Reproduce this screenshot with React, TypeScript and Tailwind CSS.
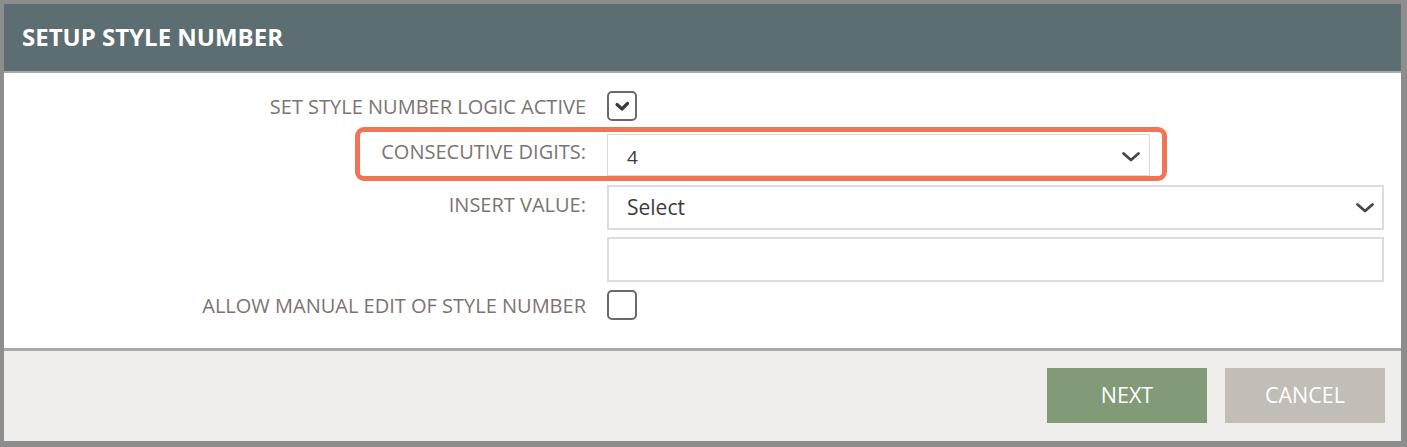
import React from "react";

const font = { fontFamily: '"Open Sans", "Liberation Sans", sans-serif' };

function Chevron() {
  return (
    <svg width="20" height="12" viewBox="0 0 20 12" className="shrink-0">
      <path d="M2.5 2.5 L10 9 L17.5 2.5" fill="none" stroke="#4b4746" strokeWidth="2.8" strokeLinecap="round" strokeLinejoin="round" />
    </svg>
  );
}

function Checkbox({ checked }: { checked?: boolean }) {
  return (
    <div className="w-[30px] h-[30px] rounded-[5px] border-2 border-[#6d6865] bg-white flex items-center justify-center">
      {checked && (
        <svg width="16" height="13" viewBox="0 0 16 13">
          <path d="M3 4.5 L8 9 L13.5 3.5" fill="none" stroke="#3f3b3a" strokeWidth="3.2" strokeLinecap="round" strokeLinejoin="round" />
        </svg>
      )}
    </div>
  );
}

function Label({ children, up }: { children: React.ReactNode; up?: boolean }) {
  return (
    <div className={`w-[582px] shrink-0 text-right text-[20px] text-[#7b7471] uppercase ${up ? "pb-[6px]" : "pt-[2px]"}`}>
      {children}
    </div>
  );
}

export default function App() {
  return (
    <div style={font} className="w-[1407px] h-[447px] bg-[#8d8d8d] pt-[4px] pl-[4px] pr-[6px] pb-[6px]">
      <div className="w-full h-full flex flex-col bg-white">
        <div className="h-[69px] bg-[#5c6e71] border-b-2 border-[#a7aba9] flex items-center pl-[18px] pb-[2px]">
          <h1 className="text-white font-bold text-[24px]">SETUP STYLE NUMBER</h1>
        </div>

        <div className="flex flex-col pt-[18px] pb-[28px] pr-[17px] border-b-[3px] border-[#a9a9a8]">
          <div className="flex items-center gap-[21px] h-[30px]">
            <Label>Set Style Number Logic Active</Label>
            <Checkbox checked />
          </div>

          <div className="relative flex items-center gap-[21px] h-[42px] mt-[13px]">
            <Label up>Consecutive Digits:</Label>
            <div className="w-[543px] h-full border border-[#dcd9d6] flex items-center justify-between pl-[19px] pr-[8px] pt-[4px]">
              <span className="text-[19px] text-[#3e3a39]">4</span>
              <Chevron />
            </div>
            <div className="absolute left-[351px] top-[-7px] w-[812px] h-[54px] rounded-[9px] border-[5px] border-[#f07455]" />
          </div>

          <div className="flex items-center gap-[21px] h-[45px] mt-[9px]">
            <Label up>Insert Value:</Label>
            <div className="flex-1 h-full border-2 border-[#dedbd8] flex items-center justify-between pl-[18px] pr-[7px]">
              <span className="text-[21px] text-[#3e3a39]">Select</span>
              <Chevron />
            </div>
          </div>

          <div className="flex items-center gap-[21px] h-[45px] mt-[7px]">
            <div className="w-[582px] shrink-0" />
            <div className="flex-1 h-full border-2 border-[#dedbd8]" />
          </div>

          <div className="flex items-center gap-[21px] h-[30px] mt-[8px]">
            <Label>Allow Manual Edit of Style Number</Label>
            <Checkbox />
          </div>
        </div>

        <div className="flex-1 bg-[#efeeec] flex items-center justify-end gap-[18px] pr-[16px] pb-[2px]">
          <button className="w-[160px] h-[55px] bg-[#829a78] text-white text-[21.5px]">NEXT</button>
          <button className="w-[160px] h-[55px] bg-[#c2bdb6] text-white text-[21.5px]">CANCEL</button>
        </div>
      </div>
    </div>
  );
}
